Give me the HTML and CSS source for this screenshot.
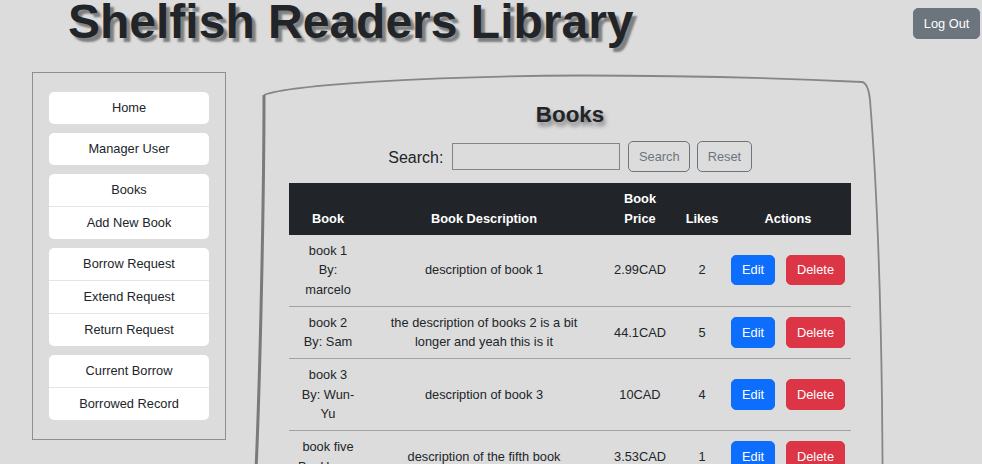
FILE: index.html
```html
<!DOCTYPE html>
<html lang="en">
<head>
<meta charset="utf-8">
<title>Shelfish Readers Library</title>
<link rel="stylesheet" href="styles.css">
</head>
<body>
<header class="topbar">
  <h1 class="title">Shelfish Readers Library</h1>
  <button class="logout" type="button">Log Out</button>
</header>
<div class="layout">
  <aside class="sidebar">
    <nav class="menu"><a class="menu-item" href="#">Home</a></nav>
    <nav class="menu"><a class="menu-item" href="#">Manager User</a></nav>
    <nav class="menu">
      <a class="menu-item" href="#">Books</a>
      <a class="menu-item" href="#">Add New Book</a>
    </nav>
    <nav class="menu">
      <a class="menu-item" href="#">Borrow Request</a>
      <a class="menu-item" href="#">Extend Request</a>
      <a class="menu-item" href="#">Return Request</a>
    </nav>
    <nav class="menu">
      <a class="menu-item" href="#">Current Borrow</a>
      <a class="menu-item" href="#">Borrowed Record</a>
    </nav>
  </aside>
  <main class="panel">
    <svg class="panel-frame" width="640" height="560" viewBox="0 0 640 560" aria-hidden="true">
      <path class="frame-top" d="M14,25 C40,15 180,6 330,5.5 C450,5.5 550,9 612,12 C617,13 619,20 620,30 C624,80 630,180 632,330 L634,560"/>
      <path class="frame-left" d="M14,25 C14,130 10,310 6,400 L4,560"/>
    </svg>
    <div class="panel-content">
      <h2 class="panel-title">Books</h2>
      <form class="search">
        <label class="search-label" for="q">Search:</label>
        <input class="search-input" id="q" type="text">
        <button class="btn-outline" type="button">Search</button>
        <button class="btn-outline btn-reset" type="button">Reset</button>
      </form>
      <table class="books">
        <colgroup>
          <col class="c-book"><col class="c-desc"><col class="c-price"><col class="c-likes"><col class="c-actions">
        </colgroup>
        <thead>
          <tr><th>Book</th><th>Book Description</th><th>Book Price</th><th class="nowrap">Likes</th><th>Actions</th></tr>
        </thead>
        <tbody>
          <tr>
            <td>book 1<br>By: marcelo</td>
            <td>description of book 1</td>
            <td>2.99CAD</td>
            <td>2</td>
            <td><div class="actions"><button class="btn btn-edit" type="button">Edit</button><button class="btn btn-delete" type="button">Delete</button></div></td>
          </tr>
          <tr>
            <td>book 2<br>By: Sam</td>
            <td>the description of books 2 is a bit longer and yeah this is it</td>
            <td>44.1CAD</td>
            <td>5</td>
            <td><div class="actions"><button class="btn btn-edit" type="button">Edit</button><button class="btn btn-delete" type="button">Delete</button></div></td>
          </tr>
          <tr>
            <td>book 3<br>By: Wun-Yu</td>
            <td>description of book 3</td>
            <td>10CAD</td>
            <td>4</td>
            <td><div class="actions"><button class="btn btn-edit" type="button">Edit</button><button class="btn btn-delete" type="button">Delete</button></div></td>
          </tr>
          <tr>
            <td>book five<br>By: Hoang</td>
            <td>description of the fifth book</td>
            <td>3.53CAD</td>
            <td>1</td>
            <td><div class="actions"><button class="btn btn-edit" type="button">Edit</button><button class="btn btn-delete" type="button">Delete</button></div></td>
          </tr>
        </tbody>
      </table>
    </div>
  </main>
</div>
</body>
</html>
```
FILE: styles.css
```css
* { box-sizing: border-box; }

body {
  margin: 0;
  background: #dcdcdc;
  color: #212529;
  font-family: "Liberation Sans", Arial, sans-serif;
  font-size: 12.8px;
  line-height: 19.2px;
}

.topbar {
  display: flex;
  justify-content: space-between;
  align-items: flex-start;
  height: 70px;
}

.title {
  margin: -2px 0 0 68px;
  font-size: 48px;
  line-height: 48px;
  font-weight: 700;
  color: #212529;
  text-shadow: 4px 4px 2px #7f7f7f;
}

.logout {
  margin: 8px 2px 0 0;
  background: #6c757d;
  color: #fff;
  border: 1px solid #6c757d;
  border-radius: 5px;
  padding: 4.8px 9.6px;
  font-family: "Liberation Sans", Arial, sans-serif;
  font-size: 12.8px;
  line-height: 19.2px;
}

.layout {
  display: flex;
  align-items: flex-start;
}

.sidebar {
  margin: 2px 24px 0 32px;
  width: 194px;
  height: 368px;
  border: 1px solid #8f8f8f;
  padding: 19px 16px;
  display: flex;
  flex-direction: column;
  gap: 9px;
  flex-shrink: 0;
}

.menu {
  background: #fff;
  border-radius: 5px;
  display: flex;
  flex-direction: column;
}

.menu-item {
  height: 32px;
  display: flex;
  align-items: center;
  justify-content: center;
  color: #212529;
  text-decoration: none;
}

.menu-item + .menu-item {
  height: 33px;
  border-top: 1px solid #e4e4e4;
}

.panel {
  display: grid;
  width: 640px;
  flex-shrink: 0;
}

.panel > * {
  grid-area: 1 / 1;
}

.panel-frame {
  display: block;
  fill: none;
}

.frame-top {
  stroke: #868686;
  stroke-width: 1.8;
}

.frame-left {
  stroke: #7a7a7a;
  stroke-width: 3;
}

.panel-content {
  padding: 32px 39px 0;
}

.panel-title {
  margin: 0;
  text-align: center;
  font-size: 22.4px;
  line-height: 26.9px;
  font-weight: 700;
  color: #212529;
  text-shadow: 2px 4px 4px rgba(0, 0, 0, 0.45);
}

.search {
  margin: 12px 0 0;
  height: 31px;
  display: flex;
  justify-content: center;
  align-items: center;
}

.search-label {
  font-size: 16px;
  line-height: 18px;
  margin: 3px 9px 0 0;
  color: #212529;
}

.search-input {
  width: 168px;
  height: 27px;
  border: 1px solid #858585;
  background: transparent;
  margin: 0 8px 0 0;
  padding: 0 4px;
}

.btn-outline {
  height: 31px;
  padding: 0 9.6px;
  border: 1px solid #6c757d;
  border-radius: 5px;
  background: transparent;
  color: #6c757d;
  font-family: "Liberation Sans", Arial, sans-serif;
  font-size: 12.8px;
}

.btn-reset {
  margin-left: 7px;
}

.books {
  margin-top: 11px;
  width: 562px;
  border-collapse: collapse;
  table-layout: fixed;
  line-height: 19.4px;
}

.c-book { width: 78px; }
.c-desc { width: 234px; }
.c-price { width: 78px; }
.c-likes { width: 46px; }
.c-actions { width: 126px; }

.books th {
  background: #212529;
  color: #fff;
  font-weight: 700;
  padding: 6.4px;
  vertical-align: bottom;
  text-align: center;
}

.books th.nowrap {
  white-space: nowrap;
}

.books td {
  padding: 6.4px;
  border-bottom: 1px solid #a2a2a2;
  vertical-align: middle;
  text-align: center;
  color: #212529;
}

.actions {
  display: flex;
  justify-content: space-between;
}

.btn {
  padding: 4.8px 9.6px;
  border: 1px solid transparent;
  border-radius: 5px;
  color: #fff;
  font-family: "Liberation Sans", Arial, sans-serif;
  font-size: 12.8px;
  line-height: 19.2px;
}

.btn-edit {
  background: #0d6efd;
  border-color: #0d6efd;
}

.btn-delete {
  background: #dc3545;
  border-color: #dc3545;
}
```
